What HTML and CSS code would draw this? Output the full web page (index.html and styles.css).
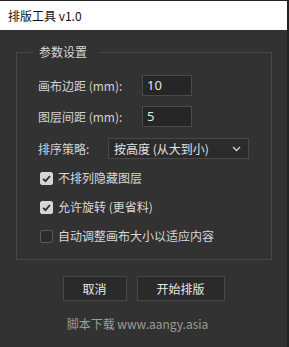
FILE: index.html
```html
<!DOCTYPE html>
<html lang="zh">
<head>
<meta charset="utf-8">
<title>排版工具 v1.0</title>
<link rel="stylesheet" href="styles.css">
</head>
<body>
<div class="window">
  <div class="titlebar">排版工具 v1.0</div>
  <div class="content">
    <fieldset class="group">
      <legend class="legend">参数设置</legend>
      <div class="row row-1">
        <span class="label label-wide">画布边距 (mm):</span>
        <div class="input">10</div>
      </div>
      <div class="row row-2">
        <span class="label label-wide">图层间距 (mm):</span>
        <div class="input">5</div>
      </div>
      <div class="row row-3">
        <span class="label label-narrow">排序策略:</span>
        <div class="select">
          <span>按高度 (从大到小)</span>
          <svg class="chev" width="9" height="6" viewBox="0 0 9 6"><path d="M1 1 L4.5 4.5 L8 1" fill="none" stroke="#cfcfcf" stroke-width="1.4"/></svg>
        </div>
      </div>
      <div class="check first">
        <span class="box checked"><svg width="13" height="13" viewBox="0 0 13 13"><path d="M3 6.8 L5.5 9.2 L10 4" fill="none" stroke="#2e2e2e" stroke-width="1.8"/></svg></span>
        <span class="ctext">不排列隐藏图层</span>
      </div>
      <div class="check">
        <span class="box checked"><svg width="13" height="13" viewBox="0 0 13 13"><path d="M3 6.8 L5.5 9.2 L10 4" fill="none" stroke="#2e2e2e" stroke-width="1.8"/></svg></span>
        <span class="ctext">允许旋转 (更省料)</span>
      </div>
      <div class="check">
        <span class="box"></span>
        <span class="ctext">自动调整画布大小以适应内容</span>
      </div>
    </fieldset>
    <div class="buttons">
      <div class="btn btn-cancel">取消</div>
      <div class="btn btn-start">开始排版</div>
    </div>
    <div class="footer">脚本下载 www.aangy.asia</div>
  </div>
</div>
</body>
</html>
```
FILE: styles.css
```css
html, body {
  margin: 0;
  padding: 0;
  background: #323232;
}
body {
  font-family: "Noto Sans CJK SC", "Noto Sans", sans-serif;
  font-size: 12px;
}
.window {
  width: 289px;
  height: 347px;
  box-sizing: border-box;
  background: #323232;
  border-top: 1px solid #262626;
  border-right: 2px solid #222222;
  overflow: hidden;
}
.titlebar {
  height: 29px;
  line-height: 29px;
  background: #ffffff;
  color: #111111;
  padding-left: 8px;
  font-size: 12px;
}
.content {
  display: flex;
  flex-direction: column;
}
.group {
  margin: 14px 15px 0 16px;
  border: 1px solid #474747;
  padding: 15px 0 14px 21px;
  min-width: 0;
}
.legend {
  margin-left: -5px;
  padding: 0 13px 0 6px;
  line-height: 16px;
  color: #d8d8d8;
  font-size: 12px;
}
.row {
  display: flex;
  align-items: center;
  height: 21px;
}
.row-2 { margin-top: 10px; }
.row-3 { margin-top: 11px; }
.label {
  color: #d2d2d2;
  line-height: 16px;
}
.label-wide { width: 104px; }
.label-narrow { width: 70px; }
.input {
  width: 50px;
  height: 21px;
  box-sizing: border-box;
  border: 1px solid #4a4a4a;
  background: #262626;
  color: #e4e4e4;
  font-family: "Noto Sans", "DejaVu Sans", sans-serif;
  font-size: 13px;
  line-height: 19px;
  padding-left: 4px;
}
.select {
  width: 141px;
  height: 21px;
  box-sizing: border-box;
  border: 1px solid #484848;
  background: #2b2b2b;
  color: #e4e4e4;
  display: flex;
  align-items: center;
  justify-content: space-between;
  padding: 0 7px 0 5px;
  line-height: 19px;
}
.chev { display: block; }
.check {
  display: flex;
  align-items: center;
  height: 18px;
  margin-top: 11px;
  padding-left: 2px;
}
.check.first { margin-top: 10px; }
.box {
  width: 13px;
  height: 13px;
  box-sizing: border-box;
  border: 1px solid #5a5a5a;
  border-radius: 2px;
  background: #2c2c2c;
  margin-right: 5px;
  flex: none;
}
.box.checked {
  background: #d6d6d6;
  border-color: #d6d6d6;
  position: relative;
}
.box.checked svg {
  position: absolute;
  left: -1px;
  top: -1px;
}
.ctext {
  color: #d8d8d8;
  line-height: 16px;
}
.buttons {
  display: flex;
  justify-content: center;
  gap: 10px;
  margin-top: 16px;
}
.btn {
  height: 25px;
  box-sizing: border-box;
  border: 1px solid #474747;
  background: #2a2a2a;
  color: #e8e8e8;
  text-align: center;
  line-height: 23px;
}
.btn-cancel { width: 64px; }
.btn-start { width: 88px; }
.footer {
  margin-top: 15px;
  line-height: 16px;
  color: #9c9c9c;
  text-align: center;
  padding-right: 12px;
}
```
